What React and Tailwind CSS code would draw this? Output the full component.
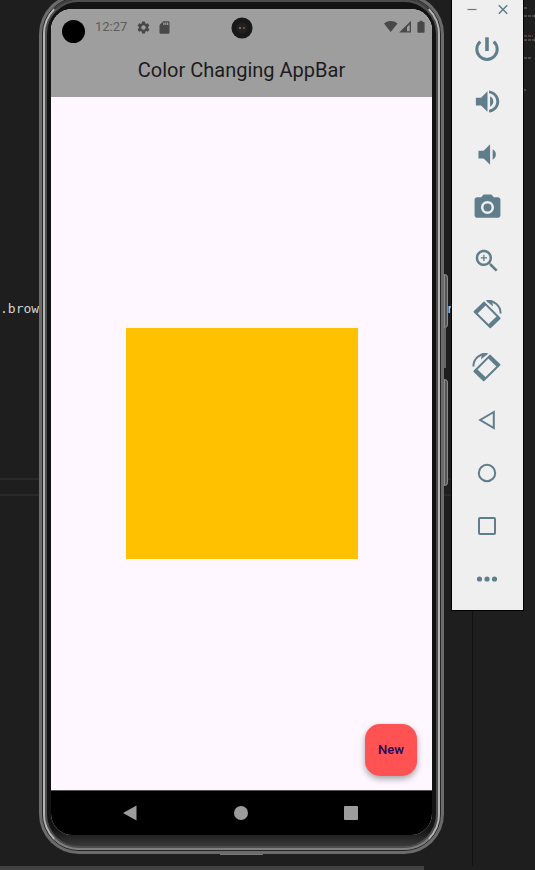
import React from "react";

const fill = "h-[31px] w-[31px] fill-current";

function RotateIcon({ flip }) {
  return (
    <svg viewBox="0 0 32 32" className={flip ? "h-8 w-8 -scale-x-100" : "h-8 w-8"}>
      <g fill="none" stroke="currentColor">
        <path d="M13 4.6 3.6 13.8 19.3 29.2 28.6 20.3Z" strokeWidth="2" strokeLinejoin="round" />
        <path d="M14 5.8 4.9 14.9M27.2 19.2 18 28" strokeWidth="3.4" />
        <path d="M16 3.2C23 2.2 29.6 7.6 29.6 15.4" strokeWidth="2" />
      </g>
      <path d="M14.5 2.2H21L22 8.4Z" fill="currentColor" />
    </svg>
  );
}

const tools = [
  {
    label: "Power",
    icon: (
      <svg viewBox="0 0 32 32" className="h-8 w-8" fill="none" stroke="currentColor">
        <path d="M9.3 8.6A10.2 10.2 0 1 0 22.7 8.6" strokeWidth="3" />
        <path d="M16 4.3V18" strokeWidth="3.6" />
      </svg>
    ),
  },
  {
    label: "Volume up",
    icon: (
      <svg viewBox="0 0 24 24" className={fill}>
        <path d="M3 9v6h4l5 5V4L7 9H3zm13.5 3c0-1.77-1.02-3.29-2.5-4.03v8.05c1.48-.73 2.5-2.25 2.5-4.02z" />
        <path d="M13.2 3.4v2.3c3.4.5 5.6 3.1 5.600 6.300s-2.200 5.800-5.600 6.300v2.300c4.500-.5 7.900-4.200 7.900-8.600s-3.400-8.100-7.900-8.600z" />
      </svg>
    ),
  },
  {
    label: "Volume down",
    icon: (
      <svg viewBox="0 0 24 24" className={fill}>
        <path d="M18.5 12c0-1.770-1.020-3.290-2.500-4.030v8.050c1.480-.73 2.500-2.250 2.500-4.020zM5 9v6h4l5 5V4L9 9H5z" />
      </svg>
    ),
  },
  {
    label: "Take screenshot",
    icon: (
      <svg viewBox="0 0 24 24" className={fill}>
        <circle cx="12" cy="12" r="3.1" />
        <path d="M9 2 7.17 4H4c-1.1 0-2 .9-2 2v12c0 1.1.9 2 2 2h16c1.1 0 2-.9 2-2V6c0-1.1-.9-2-2-2h-3.17L15 2H9zm3 15c-2.76 0-5-2.24-5-5s2.24-5 5-5 5 2.24 5 5-2.24 5-5 5z" />
      </svg>
    ),
  },
  {
    label: "Zoom",
    icon: (
      <svg viewBox="0 0 24 24" className="h-[30px] w-[30px] fill-current">
        <path d="M15.5 14h-.79l-.28-.27C15.41 12.59 16 11.11 16 9.5 16 5.91 13.09 3 9.5 3S3 5.91 3 9.5 5.91 16 9.5 16c1.61 0 3.09-.59 4.23-1.57l.27.28v.79l5 4.99L20.49 19l-4.99-5zm-6 0C7.01 14 5 11.99 5 9.5S7.01 5 9.5 5 14 7.01 14 9.5 11.99 14 9.5 14zm2.5-4h-2v2H9v-2H7V9h2V7h1v2h2v1z" />
      </svg>
    ),
  },
  { label: "Rotate left", icon: <RotateIcon /> },
  { label: "Rotate right", icon: <RotateIcon flip /> },
  {
    label: "Back",
    icon: (
      <svg viewBox="0 0 32 32" className="h-8 w-8" fill="none" stroke="currentColor" strokeWidth="2">
        <path d="M22.8 8 9.2 16 22.8 24Z" />
      </svg>
    ),
  },
  {
    label: "Home",
    icon: (
      <svg viewBox="0 0 32 32" className="h-8 w-8" fill="none" stroke="currentColor" strokeWidth="2">
        <circle cx="16" cy="16" r="8.2" />
      </svg>
    ),
  },
  {
    label: "Overview",
    icon: (
      <svg viewBox="0 0 32 32" className="h-8 w-8" fill="none" stroke="currentColor" strokeWidth="2">
        <rect x="8" y="8" width="16" height="16" rx="1" />
      </svg>
    ),
  },
  {
    label: "More",
    icon: (
      <svg viewBox="0 0 32 32" className="h-8 w-8 fill-current">
        <circle cx="8.5" cy="16" r="2.6" />
        <circle cx="16" cy="16" r="2.6" />
        <circle cx="23.5" cy="16" r="2.6" />
      </svg>
    ),
  },
];

function Editor() {
  return (
    <div className="absolute inset-0 flex flex-col">
      <div className="flex h-[478px] flex-col justify-between">
        <svg viewBox="0 0 12 100" className="h-[100px] w-3 self-end" strokeWidth="1" strokeDasharray="3 1">
          <path d="M1 8h4M1 16h11M1 40h11M1 58h8M1 90h2" stroke="#777777" />
          <path d="M1 36h9" stroke="#8a5a4a" />
        </svg>
        <pre className="mb-[158px] flex justify-between pr-[81px] font-['DejaVu_Sans_Mono',monospace] text-[13px] leading-[22px] text-[#d4d4d4]">
          <span>.brow</span>
          <span>r</span>
        </pre>
      </div>
      <div className="mr-[62px] h-[18px] border-y-2 border-[#292929]" />
      <div className="mr-[62px] flex-1 border-r border-[#111111]" />
      <div className="mr-[111px] h-1 bg-[#424242]" />
    </div>
  );
}

function StatusBar() {
  return (
    <div className="relative flex h-9 items-center pl-[11px] pr-[6px] text-[#484848]">
      <span className="mt-2 h-[23px] w-[23px] rounded-full bg-black" />
      <span className="ml-[10px] text-[13px] leading-4 text-[#5c5c5c]">12:27</span>
      <svg viewBox="0 0 24 24" className="ml-[9px] h-[15px] w-[15px] fill-current">
        <path d="M19.14 12.94c.04-.3.06-.61.06-.94 0-.32-.02-.64-.07-.94l2.03-1.58a.49.49 0 0 0 .12-.61l-1.92-3.32a.488.488 0 0 0-.59-.22l-2.39.96c-.5-.38-1.03-.7-1.62-.94l-.36-2.54a.484.484 0 0 0-.48-.41h-3.84c-.24 0-.43.17-.47.41l-.36 2.54c-.59.24-1.13.57-1.62.94l-2.39-.96c-.22-.08-.47 0-.59.22L2.74 8.87c-.12.21-.08.47.12.61l2.03 1.58c-.05.3-.09.63-.09.94s.02.64.07.94l-2.03 1.58a.49.49 0 0 0-.12.61l1.92 3.32c.12.22.37.29.59.22l2.39-.96c.5.38 1.03.7 1.62.94l.36 2.54c.05.24.24.41.48.41h3.84c.24 0 .44-.17.47-.41l.36-2.54c.59-.24 1.13-.56 1.62-.94l2.39.96c.22.08.47 0 .59-.22l1.92-3.32c.12-.22.07-.47-.12-.61l-2.01-1.58zM12 15.6c-1.98 0-3.6-1.62-3.6-3.6s1.62-3.6 3.6-3.6 3.6 1.62 3.6 3.6-1.62 3.6-3.6 3.6z" />
      </svg>
      <svg viewBox="0 0 24 24" className="ml-[6px] h-[15px] w-[15px] fill-current">
        <path d="M18 2h-8L4.02 8 4 20c0 1.1.9 2 2 2h12c1.1 0 2-.9 2-2V4c0-1.1-.9-2-2-2zm-6 6h-2V4h2v4zm3 0h-2V4h2v4zm3 0h-2V4h2v4z" />
      </svg>
      <svg viewBox="0 0 20 20" className="absolute left-1/2 top-2 h-[22px] w-[22px] -translate-x-1/2">
        <circle cx="10" cy="10" r="9.6" fill="#181818" />
        <circle cx="10" cy="10" r="5" fill="#24201f" />
        <path d="M8.2 9v2" stroke="#b8a67a" />
        <path d="M11.8 9v2" stroke="#b06a5c" />
      </svg>
      <svg viewBox="0 0 42 14" className="ml-auto h-[14px] w-[42px] fill-current">
        <path d="M0 3.5C4 .2 9.5.2 13.5 3.5L6.7 12Z" />
        <path fillRule="evenodd" d="M27 .8V12.5H15.2ZM25.7 4.5 23 7.2v4h2.7Z" />
        <path d="M35.5.8h3v1.200h1.300q.8 0 .8.800v9q0 .9-.8.900h-5.600q-.8 0-.8-.9v-9q0-.8.8-.8h1.300Z" />
      </svg>
    </div>
  );
}

function Phone() {
  return (
    <div className="relative -mt-[6px] min-w-0 flex-1 self-start">
      <div className="absolute left-full top-[280px] h-[54px] w-1 rounded-r-sm border border-[#8a8a8a] bg-[#555555]" />
      <div className="absolute left-full top-[334px] h-[40px] w-[2px] bg-[#666666]" />
      <div className="absolute left-full top-[385px] h-[107px] w-1 rounded-r-sm border border-[#8a8a8a] bg-[#555555]" />
      <div className="absolute left-[181px] top-full h-px w-[43px] bg-[#777777]" />
      <div className="rounded-[40px] bg-[#6b6b6b] p-[3px]">
        <div className="rounded-[37px] border border-[#262626]">
          <div className="rounded-[36px] border-2 border-t-[#3c3c3c] border-r-[#b5b5b5] border-b-[#808080] border-l-[#b5b5b5]">
            <div className="rounded-[34px] border-2 border-[#4d4d4d] bg-linear-to-b from-[#131313] from-98% to-[#3a3a3a] px-1 pb-[11px] pt-[7px]">
              <div className="flex h-[826px] flex-col overflow-hidden rounded-[21px] bg-[#fef7ff]">
                <header className="h-[88px] bg-[#9e9e9e]">
                  <StatusBar />
                  <h1 className="pt-[12px] text-center text-[20px] leading-[26px] text-[#1d1b20]">
                    Color Changing AppBar
                  </h1>
                </header>
                <main className="relative flex flex-1 items-center justify-center">
                  <div className="h-[231px] w-[232px] bg-[#ffc100]" />
                  <button className="absolute bottom-[14px] right-[15px] h-[52px] w-[52px] rounded-[15px] bg-[#ff5252] text-[13px] font-medium text-[#21005d] shadow-[0_3px_6px_rgba(0,0,0,0.35)]">
                    New
                  </button>
                </main>
                <nav className="flex h-[45px] items-center justify-between border-t border-[#555555] bg-black pl-[71px] pr-[74px] text-[#9c9c9c]">
                  <button aria-label="Back">
                    <svg viewBox="0 0 16 16" className="h-4 w-4 fill-current">
                      <path d="M14.5.5v15L1 8Z" />
                    </svg>
                  </button>
                  <button aria-label="Home" className="h-[14px] w-[14px] rounded-full bg-current" />
                  <button aria-label="Recent apps" className="h-[14px] w-[14px] rounded-[1px] bg-current" />
                </nav>
              </div>
            </div>
          </div>
        </div>
      </div>
    </div>
  );
}

function Toolbar() {
  return (
    <aside className="w-[73px] shrink-0 self-start border border-t-0 border-black bg-[#efefef] pb-[5px] text-[#607d8b]">
      <div className="flex h-[22px] items-start justify-between px-[15px] pt-[4px]">
        <button aria-label="Minimize">
          <svg viewBox="0 0 10 12" className="h-3 w-[10px]" stroke="currentColor" strokeWidth="1.2">
            <path d="M.5 5.5h9" />
          </svg>
        </button>
        <button aria-label="Close">
          <svg viewBox="0 0 10 12" className="h-3 w-[10px]" stroke="currentColor" strokeWidth="1.5">
            <path d="M.8 1.3 9.2 9.7M9.2 1.3.8 9.7" />
          </svg>
        </button>
      </div>
      {tools.map((tool) => (
        <button key={tool.label} aria-label={tool.label} className="flex h-[53px] w-[70px] items-center justify-center">
          {tool.icon}
        </button>
      ))}
    </aside>
  );
}

export default function App() {
  return (
    <div className="relative min-h-screen overflow-hidden bg-[#1e1e1e] font-[Roboto,sans-serif]">
      <Editor />
      <div className="relative flex gap-[7px] pl-[39px] pr-[11px]">
        <Phone />
        <Toolbar />
      </div>
    </div>
  );
}
